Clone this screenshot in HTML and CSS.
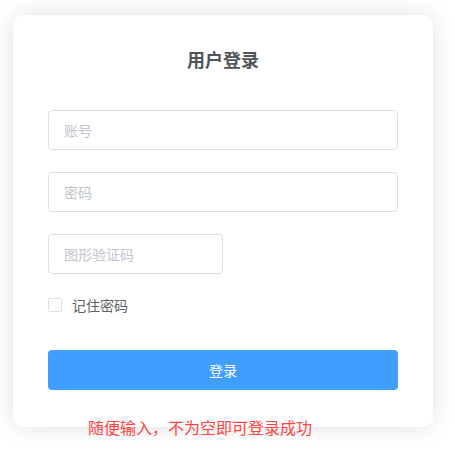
FILE: index.html
```html
<!DOCTYPE html>
<html lang="zh">
<head>
<meta charset="utf-8">
<title>用户登录</title>
<link rel="stylesheet" href="styles.css">
</head>
<body>
<div class="page">
  <div class="card">
    <h3 class="title">用户登录</h3>
    <div class="field"><input class="input" type="text" placeholder="账号"></div>
    <div class="field"><input class="input" type="password" placeholder="密码"></div>
    <div class="field"><input class="input captcha" type="text" placeholder="图形验证码"></div>
    <label class="remember"><span class="box"></span><span class="label">记住密码</span></label>
    <button class="btn" type="button">登录</button>
  </div>
  <p class="tip">随便输入，不为空即可登录成功</p>
</div>
</body>
</html>
```

FILE: styles.css
```css
* { box-sizing: border-box; }
html, body { margin: 0; background: #fff; }
body {
  font-family: "Noto Sans CJK SC", "Noto Sans", "Liberation Sans", sans-serif;
  font-size: 14px;
}
.page {
  position: relative;
  min-height: 462px;
  padding: 15px 0 0 13px;
}
.card {
  width: 420px;
  background: #fff;
  border-radius: 10px;
  box-shadow: 0 0 25px rgba(0, 0, 0, 0.12);
  padding: 33px 35px 37px;
}
.title {
  margin: 0 0 40px;
  text-align: center;
  font-size: 18px;
  line-height: 22px;
  font-weight: bold;
  color: #505458;
}
.field { margin-bottom: 22px; height: 40px; }
.input {
  display: block;
  width: 100%;
  height: 40px;
  border: 1px solid #dcdfe6;
  border-radius: 4px;
  padding: 0 15px;
  font: inherit;
  font-size: 14px;
  color: #606266;
  outline: none;
  background: #fff;
}
.input::placeholder { color: #c0c4cc; }
.input.captcha { width: 175px; }
.remember {
  display: flex;
  align-items: center;
  height: 18px;
  margin-bottom: 36px;
  cursor: pointer;
}
.box {
  width: 14px;
  height: 14px;
  border: 1px solid #dcdfe6;
  border-radius: 2px;
  background: #fff;
}
.label {
  margin-left: 10px;
  color: #606266;
  font-size: 14px;
  line-height: 18px;
}
.btn {
  display: block;
  width: 100%;
  height: 40px;
  border: none;
  border-radius: 4px;
  background: #409eff;
  color: #fff;
  font: inherit;
  font-size: 14px;
  cursor: pointer;
}
.tip {
  position: absolute;
  left: 88px;
  top: 416px;
  margin: 0;
  font-size: 16px;
  line-height: 22px;
  color: #f44;
}
```
